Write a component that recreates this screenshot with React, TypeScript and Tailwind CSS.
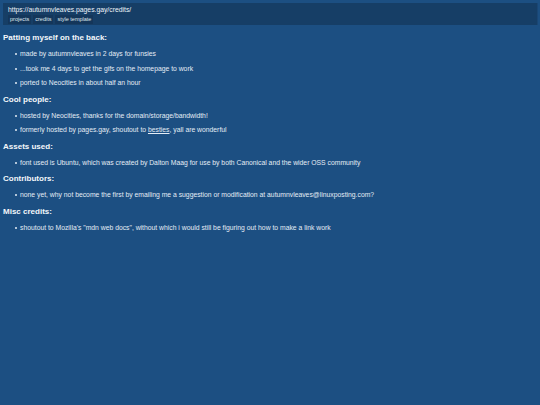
const sections = [
  {
    title: 'Patting myself on the back:',
    items: [
      <>made by autumnvleaves in 2 days for funsies</>,
      <>...took me 4 days to get the gifs on the homepage to work</>,
      <>ported to Neocities in about half an hour</>,
    ],
  },
  {
    title: 'Cool people:',
    items: [
      <>hosted by Neocities, thanks for the domain/storage/bandwidth!</>,
      <>
        formerly hosted by pages.gay, shoutout to <span className="underline">besties</span>, yall are wonderful
      </>,
    ],
  },
  {
    title: 'Assets used:',
    items: [
      <>font used is Ubuntu, which was created by Dalton Maag for use by both Canonical and the wider OSS community</>,
    ],
  },
  {
    title: 'Contributors:',
    items: [
      <>none yet, why not become the first by emailing me a suggestion or modification at autumnvleaves@linuxposting.com?</>,
    ],
  },
  {
    title: 'Misc credits:',
    items: [
      <>shoutout to Mozilla's "mdn web docs", without which i would still be figuring out how to make a link work</>,
    ],
  },
]

const tags = ['projects', 'credits', 'style template']

export default function App() {
  return (
    <div
      className="min-h-[405px] w-[540px] bg-[#1c4f82] pt-[3px] text-[#e4ecf5]"
      style={{ fontFamily: '"Liberation Sans", Arial, sans-serif' }}
    >
      <header className="mx-[3px] bg-[#163e66] px-[5px] pt-[2px] pb-[1px] shadow-[1px_0_0_#1a4674]">
        <div className="text-[6.8px] leading-[9px] text-[#eef3f9]">https://autumnvleaves.pages.gay/credits/</div>
        <nav className="mt-[1px] flex gap-[2px]">
          {tags.map((t) => (
            <span key={t} className="h-[9px] bg-[#14365a] px-[2px] text-[5.5px] leading-[9px] text-[#dfe7f0]">
              {t}
            </span>
          ))}
        </nav>
      </header>

      <main className="mt-[8px] flex flex-col gap-[7.5px] pl-[3px]">
        {sections.map((s) => (
          <section key={s.title}>
            <h3 className="text-[8px] font-bold leading-[10px] text-[#f4f7fb]">{s.title}</h3>
            <ul className="mt-[7px] flex flex-col gap-[6.5px] pl-[12px]">
              {s.items.map((item, i) => (
                <li key={i} className="flex items-center text-[6.8px] leading-[8px]">
                  <span className="mr-[3px] h-[2px] w-[2px] shrink-0 rounded-full bg-[#e4ecf5]" />
                  <span>{item}</span>
                </li>
              ))}
            </ul>
          </section>
        ))}
      </main>
    </div>
  )
}
